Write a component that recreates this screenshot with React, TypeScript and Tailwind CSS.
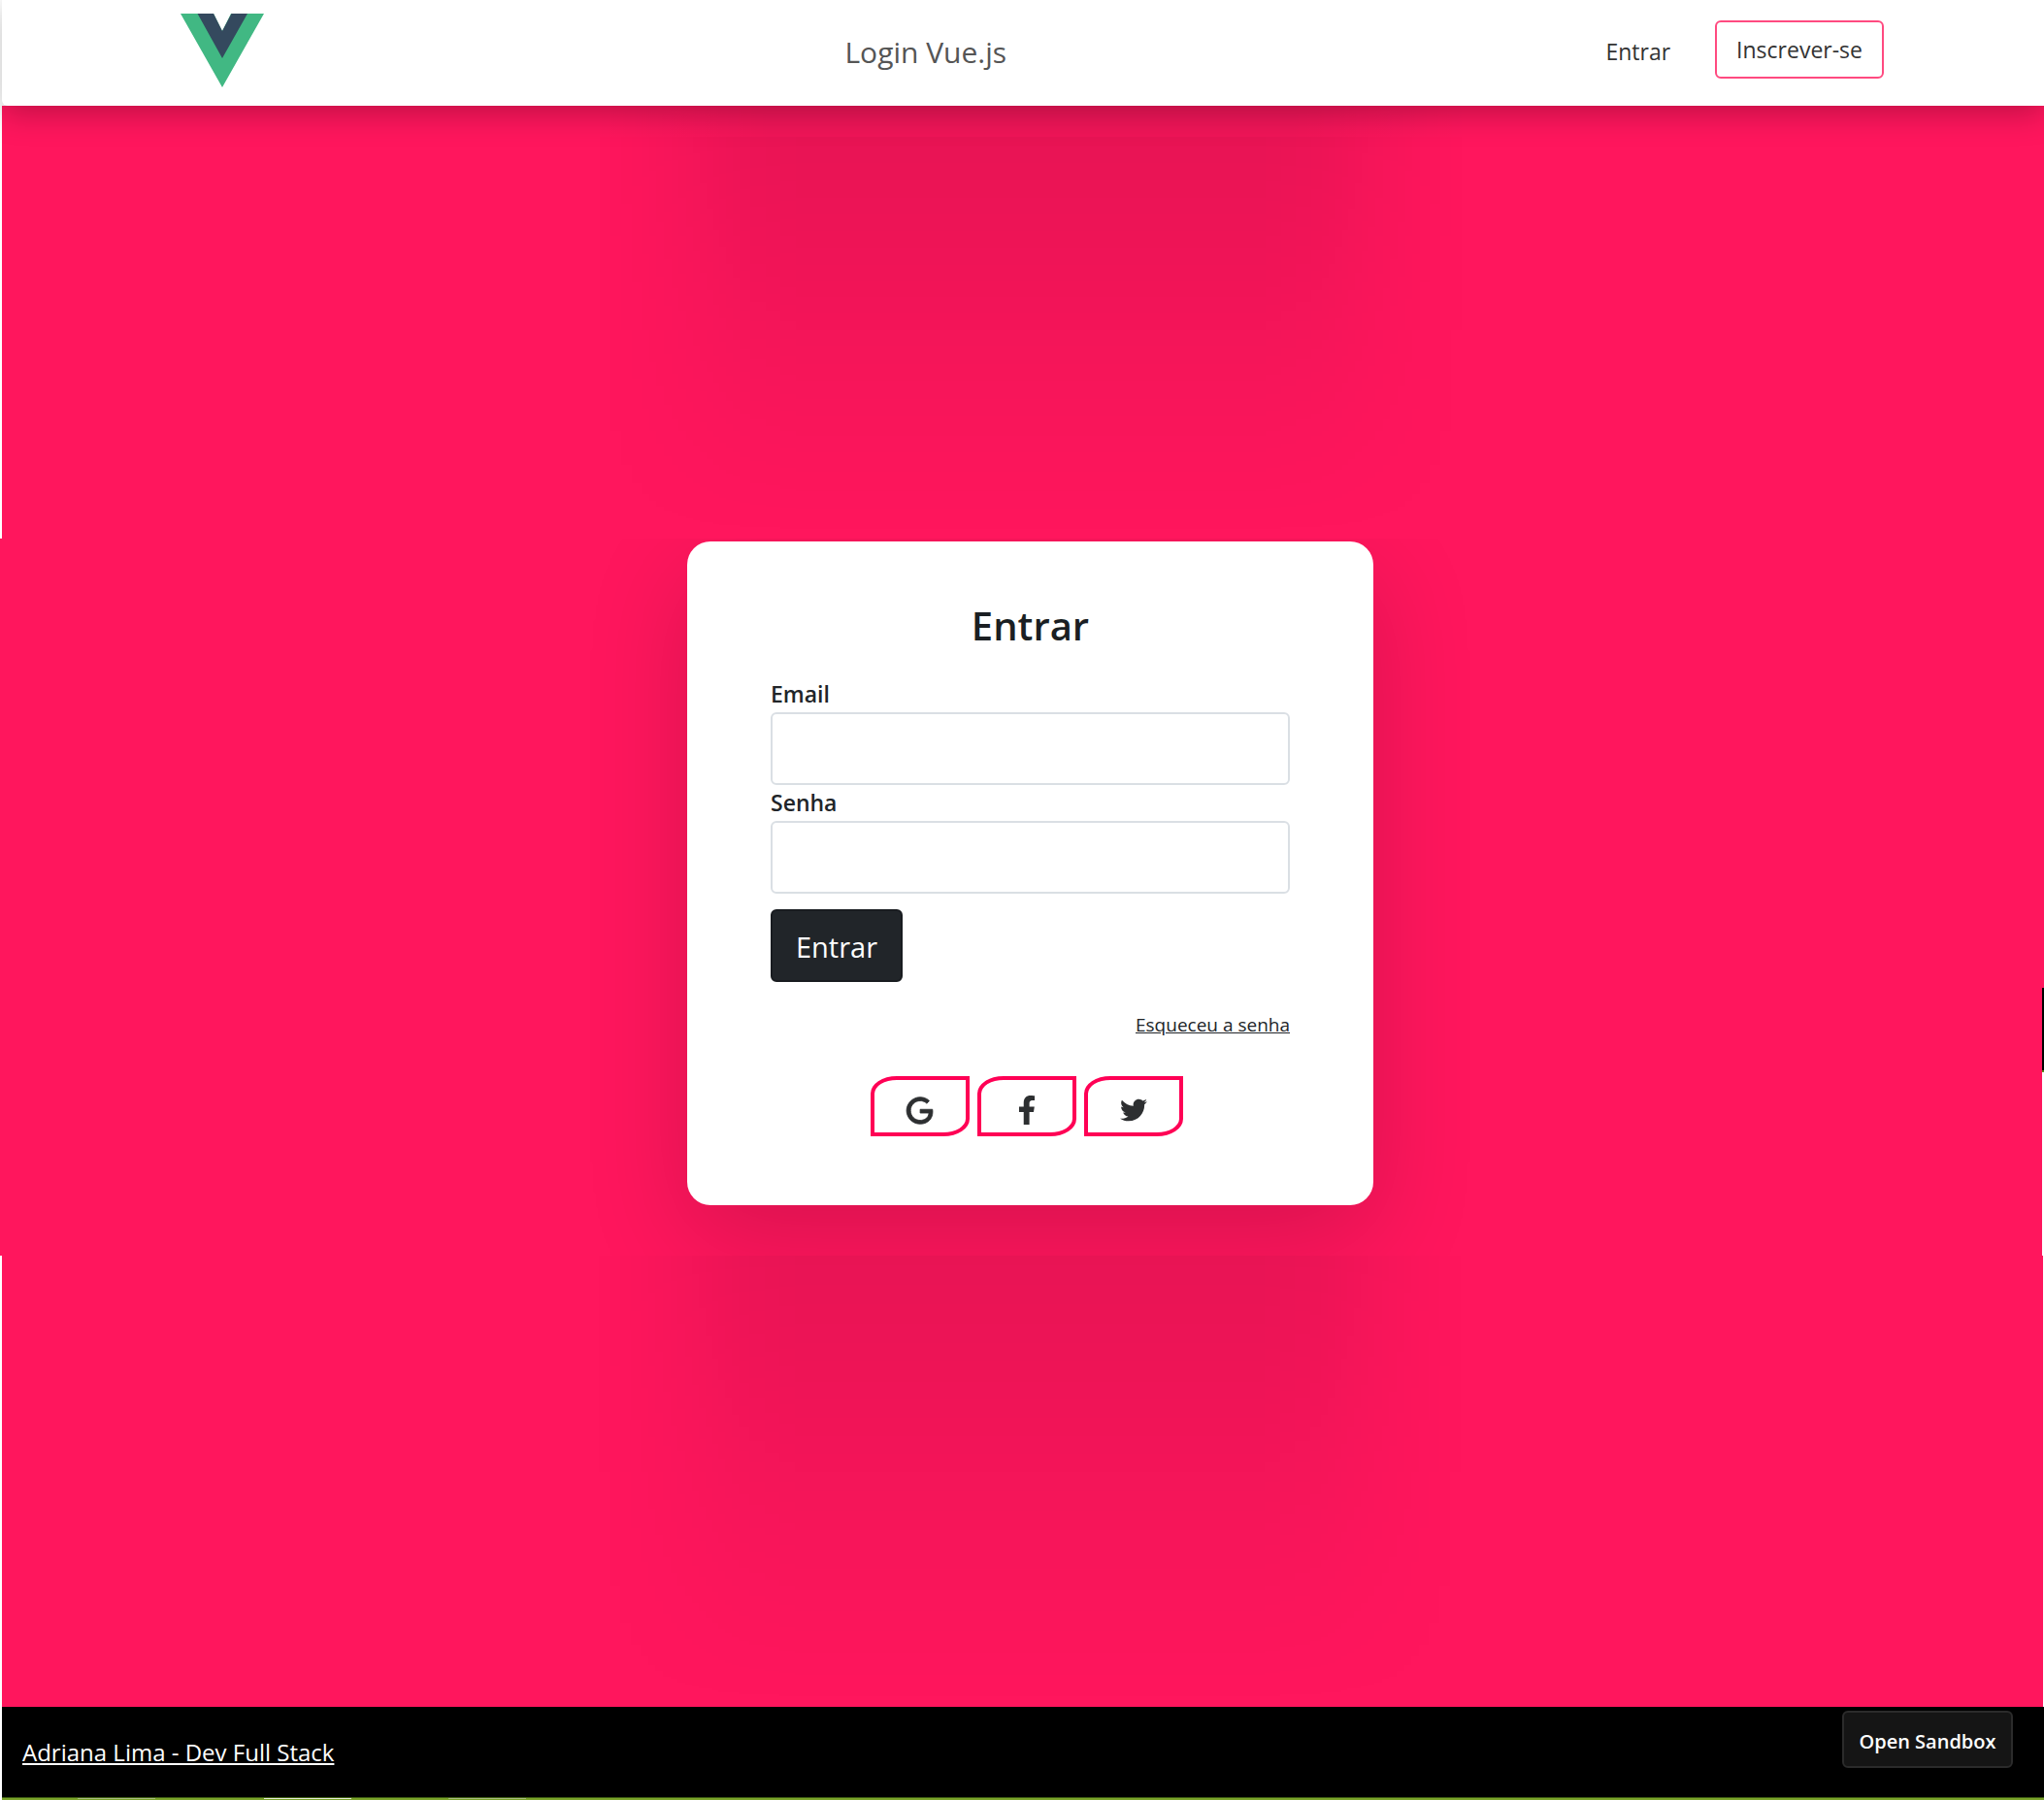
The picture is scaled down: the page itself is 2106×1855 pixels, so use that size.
import { FaFacebookF, FaTwitter } from "react-icons/fa";

function VueLogo() {
  return (
    <svg viewBox="0 0 86 76" className="h-[76px] w-[86px]" role="img" aria-label="Vue.js">
      <path d="M0 0H34L43 18L52 0H86L43 76Z" fill="#41b883" />
      <path d="M17.500 0H34L43 18L52.500 0H69L43 46Z" fill="#34495e" />
    </svg>
  );
}

function GoogleIcon() {
  return (
    <svg viewBox="1.500 1.500 20.500 21" className="size-[29px]" fill="currentColor" stroke="currentColor" strokeWidth="0.6">
      <path d="M21.350 11.100H12.180V13.830H18.690C18.360 17.640 15.190 19.270 12.190 19.270C8.360 19.270 5 16.250 5 12C5 7.900 8.200 4.730 12.200 4.730C15.290 4.730 17.100 6.700 17.100 6.700L19 4.720C19 4.720 16.560 2 12.100 2C6.420 2 2.030 6.800 2.030 12C2.030 17.050 6.160 22 12.250 22C17.600 22 21.500 18.330 21.500 12.910C21.500 11.760 21.350 11.100 21.350 11.100Z" />
    </svg>
  );
}

function Header() {
  return (
    <header className="relative z-10 ml-0.5 grid h-[109px] grid-cols-[39%_1fr_auto] items-start rounded-bl-md bg-white pr-[165px] pl-[184px] shadow-[0_8px_32px_rgba(0,0,0,0.25)]">
      <a href="#" className="pt-3.5">
        <VueLogo />
      </a>
      <p className="pt-[34px] text-[30px] leading-10 text-[#555555]">Login Vue.js</p>
      <nav className="flex pt-[21px] text-[23px] text-[#333333]">
        <a href="#entrar" className="mr-[46px] pt-4 leading-8">
          Entrar
        </a>
        <a
          href="#inscrever"
          className="flex h-[60px] items-center rounded-md border-2 border-[#ff4a80] px-5"
        >
          Inscrever-se
        </a>
      </nav>
    </header>
  );
}

function ColumnShadow() {
  return (
    <div className="flex grow justify-center pl-[15px]" aria-hidden="true">
      <div className="w-full max-w-[900px] bg-[linear-gradient(to_right,transparent,rgba(0,0,0,0.014)_5%,rgba(0,0,0,0.045)_11%,rgba(0,0,0,0.076)_17%,rgba(0,0,0,0.09)_24%,rgba(0,0,0,0.09)_76%,rgba(0,0,0,0.076)_83%,rgba(0,0,0,0.045)_89%,rgba(0,0,0,0.014)_95%,transparent)] mask-[linear-gradient(to_bottom,black,rgba(0,0,0,0.8)_20%,rgba(0,0,0,0.48)_50%,rgba(0,0,0,0.18)_80%,transparent)]" />
    </div>
  );
}

function Field({ id, label, type }: { id: string; label: string; type: string }) {
  return (
    <div>
      <label htmlFor={id} className="block h-[37px] text-[23px] leading-9 font-semibold text-[#212529]">
        {label}
      </label>
      <input
        id={id}
        type={type}
        className="block h-[75px] w-full rounded-md border-2 border-[#dadfe4] bg-white px-5 text-[28px] outline-none"
      />
    </div>
  );
}

const socials = [
  { name: "Google", icon: <GoogleIcon /> },
  { name: "Facebook", icon: <FaFacebookF className="size-[30px]" /> },
  { name: "Twitter", icon: <FaTwitter className="size-7" /> },
];

function LoginCard() {
  return (
    <form
      onSubmit={(e) => e.preventDefault()}
      className="w-full max-w-[707px] rounded-3xl bg-white px-[86px] pt-[59px] pb-[71px] shadow-[0_34px_106px_rgba(0,0,0,0.155)]"
    >
      <h1 className="mb-6 text-center text-[40px] leading-[56px] font-semibold text-[#1b1f23]">Entrar</h1>
      <Field id="email" label="Email" type="email" />
      <Field id="senha" label="Senha" type="password" />
      <button
        type="submit"
        className="mt-4 h-[75px] w-[136px] rounded-md border-2 border-[#191c20] bg-[#212529] pt-0.5 text-[29px] text-white"
      >
        Entrar
      </button>
      <div className="mt-7 text-right">
        <a href="#senha-esquecida" className="text-[19px] leading-8 text-[#212529] underline">
          Esqueceu a senha
        </a>
      </div>
      <div className="mt-[37px] mr-2 flex justify-center gap-2">
        {socials.map(({ name, icon }) => (
          <button
            key={name}
            type="button"
            aria-label={name}
            className="flex h-[62px] w-[102px] items-center justify-center rounded-tl-[27px_18px] rounded-br-[27px_18px] border-4 border-[#ff0055] pt-2 text-[#2d2f31]"
          >
            {icon}
          </button>
        ))}
      </div>
    </form>
  );
}

function Footer() {
  return (
    <footer className="ml-0.5 bg-black">
      <div className="flex h-[93px] items-start justify-between pr-8 pl-[21px]">
        <a href="#autora" className="pt-[29px] text-[24px] leading-9 text-white underline">
          Adriana Lima - Dev Full Stack
        </a>
        <button
          type="button"
          className="mt-1 h-[59px] w-44 rounded-md border-2 border-[#2b2b2b] bg-[#151515] pt-1 text-[20px] font-semibold text-white"
        >
          Open Sandbox
        </button>
      </div>
      <div className="flex h-[3px] border-t border-[#3c5a12] bg-[#7aa32a]" aria-hidden="true">
        <span className="ml-[78px] h-px w-20 bg-[#a9bd80]" />
        <span className="ml-28 h-px w-[90px] bg-[#e6ecd8]" />
        <span className="ml-[100px] h-px w-20 bg-[#a9bd80]" />
      </div>
    </footer>
  );
}

export default function App() {
  return (
    <div className="flex min-h-screen flex-col bg-white font-['Open_Sans','Noto_Sans',sans-serif]">
      <Header />
      <main className="flex grow flex-col">
        <section className="ml-0.5 flex grow-[446] basis-0 flex-col bg-[#ff165d]">
          <div className="flex h-8 justify-center pl-[15px]">
            <div className="w-full max-w-[900px] bg-[linear-gradient(to_right,transparent,rgba(0,0,0,0.06)_20%,rgba(0,0,0,0.06)_80%,transparent)]" />
          </div>
          <ColumnShadow />
        </section>
        <section className="relative flex justify-center overflow-hidden bg-[#ff165d] pt-[3px] pb-[52px] pl-[17px]">
          <LoginCard />
          <div className="absolute right-0 bottom-0 w-0.5" aria-hidden="true">
            <div className="h-[85px] bg-black" />
            <div className="h-0.5 bg-[#5c8a1c]" />
            <div className="h-[189px] bg-white" />
          </div>
        </section>
        <section className="mr-px ml-0.5 flex grow-[465] basis-0 flex-col bg-[#ff165d]">
          <ColumnShadow />
        </section>
      </main>
      <Footer />
    </div>
  );
}
